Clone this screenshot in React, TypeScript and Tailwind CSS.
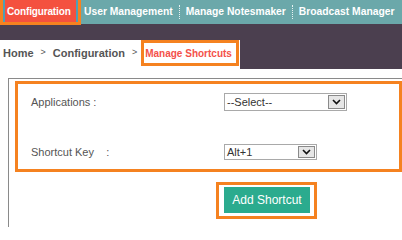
import React from "react";

const navItems = ["User Management", "Manage Notesmaker", "Broadcast Manager"];

function SelectBox({ value, width }: { value: string; width: string }) {
  return (
    <div className={`flex h-full items-stretch border border-[#a9a9a9] bg-white ${width}`}>
      <span className="flex-1 pl-[2px] text-[11px] leading-none text-[#333] flex items-center">{value}</span>
      <span className="w-[17px] m-[1px] flex items-center justify-center bg-[#e6e6e6] border border-[#8a8a8a]">
        <svg width="9" height="6" viewBox="0 0 9 6">
          <path d="M1 1 L4.5 4.5 L8 1" fill="none" stroke="#111" strokeWidth="1.6" />
        </svg>
      </span>
    </div>
  );
}

export default function App() {
  return (
    <div className="w-[402px] h-[240px] bg-white overflow-hidden font-['Liberation_Sans',Arial,sans-serif]">
      {/* top nav */}
      <div className="relative z-10 h-[24px] bg-[#6ba8aa] flex items-start whitespace-nowrap">
        <div className="w-[81px] h-[25px] border-[3px] border-t-0 border-[#f58220] shrink-0">
          <div className="h-full border-x-2 border-[#4f9fb4] bg-[#f4513f] flex items-center pl-[2px] text-white font-bold text-[10px] tracking-[-0.15px]">
            Configuration
          </div>
        </div>
        <div className="flex items-center h-[24px] text-white font-bold text-[10.3px]">
          {navItems.map((item, i) => (
            <React.Fragment key={item}>
              {i > 0 && <span className="mx-[6px] h-[14px] border-l border-dotted border-[#e8f2f2]" />}
              <span className={i === 0 ? "ml-[3px]" : ""}>{item}</span>
            </React.Fragment>
          ))}
        </div>
      </div>

      {/* dark band + breadcrumb */}
      <div className="h-[16px] bg-[#4b3f4f]" />
      <div className="h-[29px] flex">
        <div className="w-[240px] bg-white flex items-start">
          <div className="h-[26px] flex items-center pl-[3px] text-[11px] font-bold text-[#555]">
            <span>Home</span>
            <span className="mx-[7px] font-normal text-[9px]">&gt;</span>
            <span>Configuration</span>
            <span className="ml-[7px] mr-[4px] font-normal text-[9px]">&gt;</span>
          </div>
          <div className="h-[26px] w-[98px] border-[3px] border-[#f58220] flex items-center pl-[1px] text-[10px] font-bold text-[#f4514a]">
            Manage Shortcuts
          </div>
        </div>
        <div className="flex-1 bg-[#4b3f4f]" />
      </div>

      {/* content */}
      <div className="mt-[9px] ml-[8px] border-t border-l border-[#8a8a8a] pl-[6px] pt-[2px] pb-[8px]">
        <div className="border-[3px] border-[#f58220] pl-[13px] pt-[9px] pb-[9px] text-[11px] text-[#555]">
          <div className="flex items-center h-[18px]">
            <span className="w-[193px] shrink-0">Applications :</span>
            <SelectBox value="--Select--" width="w-[123px]" />
          </div>
          <div className="flex items-center h-[16px] mt-[33px]">
            <span className="w-[193px] shrink-0 whitespace-pre">Shortcut Key    :</span>
            <SelectBox value="Alt+1" width="w-[93px]" />
          </div>
        </div>
        <div className="mt-[10px] ml-[201px] w-[101px] h-[37px] border-[3px] border-[#f58220] pl-[5px] pt-[2px]">
          <button className="w-[86px] h-[26px] bg-[#2bab8e] text-white text-[12px] leading-none flex items-center justify-center">
            Add Shortcut
          </button>
        </div>
      </div>
    </div>
  );
}
